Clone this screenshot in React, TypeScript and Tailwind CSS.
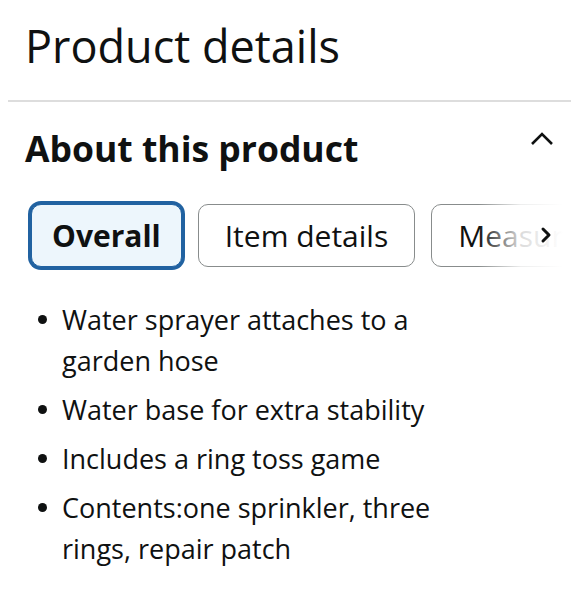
import { ChevronRight } from 'lucide-react';

const tabs = ['Overall', 'Item details', 'Measurements'];

const bullets = [
  'Water sprayer attaches to a garden hose',
  'Water base for extra stability',
  'Includes a ring toss game',
  'Contents:one sprinkler, three rings, repair patch',
];

const App = () => {
  return (
    <div className="min-h-[600px] bg-white px-2 text-[#0f1111] font-['Open_Sans',sans-serif]">
      {/* Header */}
      <div className="px-[17px] pt-[18px] pb-[26px]">
        <h1 className="text-[45px] leading-[56px] font-normal">Product details</h1>
      </div>
      <div className="h-[2px] bg-[#dddddd]" />

      {/* Section */}
      <div className="flex items-center justify-between pl-[17px] pr-[17px] pt-[21px]">
        <h2 className="text-[35.5px] leading-[50px] font-bold">About this product</h2>
        <svg width="24" height="16" viewBox="0 0 24 16" className="mb-[18px]">
          <path d="M2 13 L12 3 L22 13" fill="none" stroke="#0f1111" strokeWidth="2.6" />
        </svg>
      </div>

      {/* Tabs */}
      <div className="relative mt-[27px] overflow-hidden">
        <div className="flex gap-[16px] pl-[23px] pt-[4px] pb-[4px]">
          {tabs.map((tab, i) => (
            <button
              key={tab}
              className={
                i === 0
                  ? 'h-[63px] shrink-0 rounded-[10px] border border-[#2162a1] bg-[#edf6fc] px-[20px] text-[30px] font-bold ring-[3px] ring-[#2162a1]'
                  : 'h-[63px] shrink-0 rounded-[10px] border border-[#888c8c] bg-white px-[26px] text-[30px]'
              }
            >
              {tab}
            </button>
          ))}
        </div>
        <div className="absolute top-0 bottom-0 left-[470px] w-[85px] bg-gradient-to-r from-white/0 via-white/85 to-white" />
        <div className="absolute top-0 bottom-0 left-[555px] right-0 bg-white" />
        <ChevronRight className="absolute left-[526px] top-[23px] h-[24px] w-[24px] text-[#0f1111]" strokeWidth={3} />
      </div>

      {/* Bullets */}
      <ul className="mt-[28px] flex w-[470px] flex-col gap-[8px] pl-[30px]">
        {bullets.map((b) => (
          <li key={b} className="flex items-start gap-[15px] text-[27px] leading-[41px]">
            <span className="mt-[16px] h-[9px] w-[9px] shrink-0 rounded-full bg-[#0f1111]" />
            <span>{b}</span>
          </li>
        ))}
      </ul>
    </div>
  );
};

export default App;
